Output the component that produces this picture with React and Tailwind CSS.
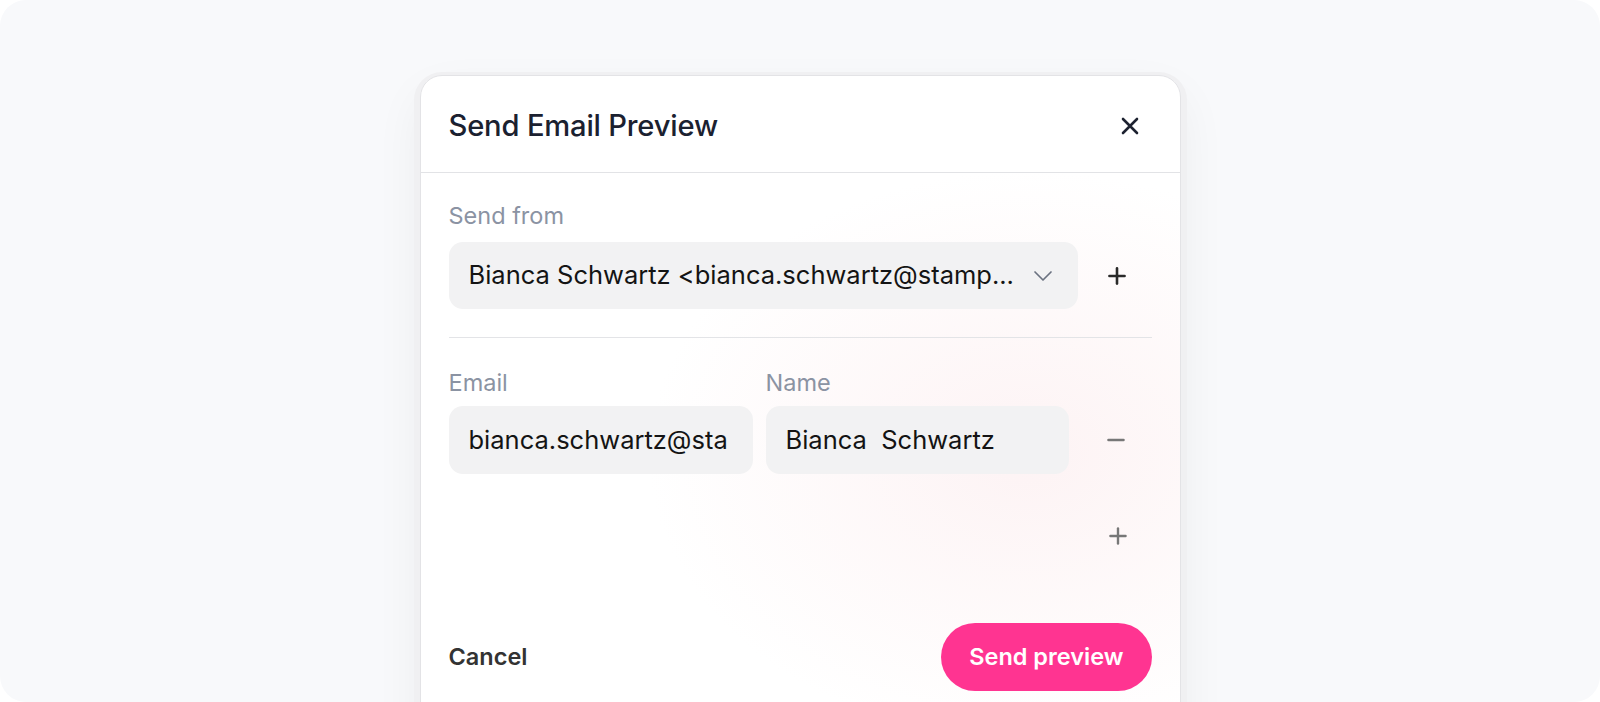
import { Plus, Minus } from 'lucide-react'

const font = { fontFamily: 'Inter, "Noto Sans", sans-serif' }

const App = () => {
  return (
    <div className="w-[1600px] h-[702px] bg-white" style={font}>
      <div className="w-full h-full rounded-[26px] bg-[#f8f9fb] overflow-hidden flex justify-center pt-[75px]">
        {/* Modal */}
        <div className="w-[761px] h-[680px] shrink-0 rounded-[22px] border border-[#e3e3e6] bg-[radial-gradient(ellipse_50%_42%_at_80%_56%,#fdf3f4_0%,#ffffff_100%)] shadow-[0_3px_0_6px_#f0f0f2,0_20px_50px_rgba(15,23,42,0.06)] flex flex-col">
          {/* Header */}
          <div className="h-[97px] shrink-0 flex items-center justify-between pl-[28px] pr-[41px] pt-[3px] border-b border-[#e2e3e6]">
            <h2 className="text-[29.2px] font-medium tracking-[-0.2px] text-[#1b2130]">Send Email Preview</h2>
            <button className="w-[18px] h-[18px] flex items-center justify-center">
              <svg width="18" height="18" viewBox="0 0 18 18" fill="none" stroke="#1d2230" strokeWidth="2.6" strokeLinecap="round">
                <path d="M2 2l14 14M16 2L2 16" />
              </svg>
            </button>
          </div>

          {/* Body */}
          <div className="flex-1 flex flex-col px-[28px] pt-[29px]">
            <label className="text-[23.5px] leading-[28px] text-[#8b93a3]">Send from</label>
            <div className="mt-[12px] flex items-center">
              <div className="w-[629px] h-[67px] rounded-[14px] bg-[#f2f2f3] flex items-center justify-between pl-[20px] pr-[25px]">
                <span className="text-[25.5px] text-[#141414] whitespace-nowrap">Bianca Schwartz &lt;bianca.schwartz@stamp...</span>
                <svg width="20" height="12" viewBox="0 0 20 12" fill="none" stroke="#6b7280" strokeWidth="1.7" strokeLinecap="round" strokeLinejoin="round">
                  <path d="M2 2l8 8 8-8" />
                </svg>
              </div>
              <div className="flex-1 flex justify-center pl-[5px]">
                <Plus size={26} strokeWidth={2.4} className="text-[#2a2a2a]" />
              </div>
            </div>

            <div className="mt-[28px] h-px bg-[#e3e4e7]" />

            <div className="mt-[31px] flex gap-[13px]">
              <div className="w-[304px] flex flex-col">
                <label className="text-[23.5px] leading-[28px] text-[#8b93a3]">Email</label>
                <div className="mt-[9px] h-[68px] rounded-[14px] bg-[#f2f2f3] flex items-center pl-[20px] overflow-hidden">
                  <span className="text-[25.5px] text-[#141414] whitespace-nowrap">bianca.schwartz@sta</span>
                </div>
              </div>
              <div className="w-[303px] flex flex-col">
                <label className="text-[23.5px] leading-[28px] text-[#8b93a3]">Name</label>
                <div className="mt-[9px] h-[68px] rounded-[14px] bg-[#f2f2f3] flex items-center pl-[20px]">
                  <span className="text-[25.5px] text-[#141414] whitespace-pre">Bianca  Schwartz</span>
                </div>
              </div>
              <div className="flex-1 flex flex-col justify-end">
                <div className="h-[68px] flex items-center justify-center pr-[2px]">
                  <Minus size={26} strokeWidth={2.2} className="text-[#777777]" />
                </div>
              </div>
            </div>

            <div className="mt-[49px] flex justify-end pr-[21px]">
              <Plus size={26} strokeWidth={2.2} className="text-[#777777]" />
            </div>

            <div className="mt-[74px] flex items-center justify-between">
              <button className="text-[23.5px] font-semibold text-[#333333]">Cancel</button>
              <button className="h-[68px] px-[28px] rounded-full bg-[#ff3491] text-white text-[23.5px] font-semibold">Send preview</button>
            </div>
          </div>
        </div>
      </div>
    </div>
  )
}

export default App
